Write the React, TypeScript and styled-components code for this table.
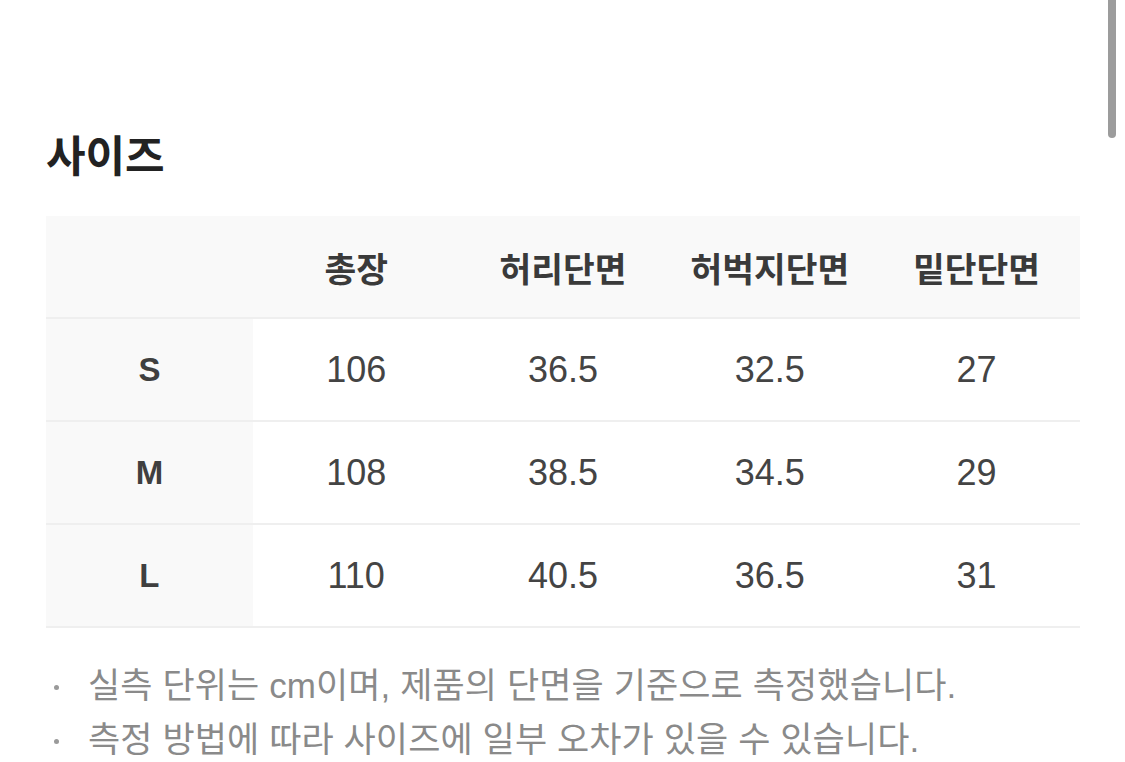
import styled, { createGlobalStyle } from "styled-components";

const GlobalStyle = createGlobalStyle`
  html, body {
    margin: 0;
    padding: 0;
    background: #ffffff;
  }
  body {
    font-family: "Liberation Sans", "Noto Sans CJK KR", sans-serif;
    color: #333;
    overflow: hidden;
  }
`;

const columns = ["총장", "허리단면", "허벅지단면", "밑단단면"];

const rows = [
  { size: "S", values: ["106", "36.5", "32.5", "27"] },
  { size: "M", values: ["108", "38.5", "34.5", "29"] },
  { size: "L", values: ["110", "40.5", "36.5", "31"] },
];

const notes = [
  "실측 단위는 cm이며, 제품의 단면을 기준으로 측정했습니다.",
  "측정 방법에 따라 사이즈에 일부 오차가 있을 수 있습니다.",
];

export default function App() {
  return (
    <>
      <GlobalStyle />
      <Page>
        <Title>사이즈</Title>
        <Table>
          <HeadCell />
          {columns.map((c) => (
            <HeadCell key={c}>{c}</HeadCell>
          ))}
          {rows.map((r) => (
            <Row key={r.size}>
              <SizeCell>{r.size}</SizeCell>
              {r.values.map((v, i) => (
                <ValueCell key={i}>{v}</ValueCell>
              ))}
            </Row>
          ))}
        </Table>
        <Notes>
          {notes.map((n) => (
            <Note key={n}>
              <Bullet />
              <NoteText>{n}</NoteText>
            </Note>
          ))}
        </Notes>
      </Page>
      <ScrollThumb />
    </>
  );
}

const Page = styled.div`
  width: 1034px;
  padding: 126px 0 0 46px;
`;

const Title = styled.h2`
  margin: 0 0 36px;
  font-family: "Noto Sans CJK KR", sans-serif;
  font-size: 43px;
  font-weight: 700;
  line-height: 54px;
  color: #222;
`;

const Table = styled.div`
  display: grid;
  grid-template-columns: repeat(5, 1fr);
`;

const Row = styled.div`
  display: contents;
`;

const Cell = styled.div`
  height: 101px;
  display: flex;
  align-items: center;
  justify-content: center;
  border-bottom: 2px solid #efefef;
`;

const HeadCell = styled(Cell)`
  background: #f9f9f9;
  font-family: "Noto Sans CJK KR", sans-serif;
  font-size: 34.5px;
  font-weight: 600;
  color: #3a3a3a;
`;

const SizeCell = styled(Cell)`
  background: #f9f9f9;
  font-size: 33px;
  font-weight: 700;
  color: #3f3f3f;
`;

const ValueCell = styled(Cell)`
  font-size: 36px;
  font-weight: 400;
  color: #444;
`;

const Notes = styled.ul`
  list-style: none;
  margin: 27px 0 0;
  padding: 0;
`;

const Note = styled.li`
  display: flex;
  align-items: center;
  height: 54px;
  color: #8a8a8a;
`;

const Bullet = styled.span`
  width: 5px;
  height: 5px;
  margin: 10px 29px 0 8px;
  border-radius: 50%;
  background: #9a9a9a;
  flex-shrink: 0;
`;

const NoteText = styled.span`
  font-size: 35px;
  letter-spacing: 0.1px;
`;

const ScrollThumb = styled.div`
  position: fixed;
  top: -6px;
  right: 9px;
  width: 8px;
  height: 144px;
  border-radius: 4px;
  background: #9c9c9c;
`;
